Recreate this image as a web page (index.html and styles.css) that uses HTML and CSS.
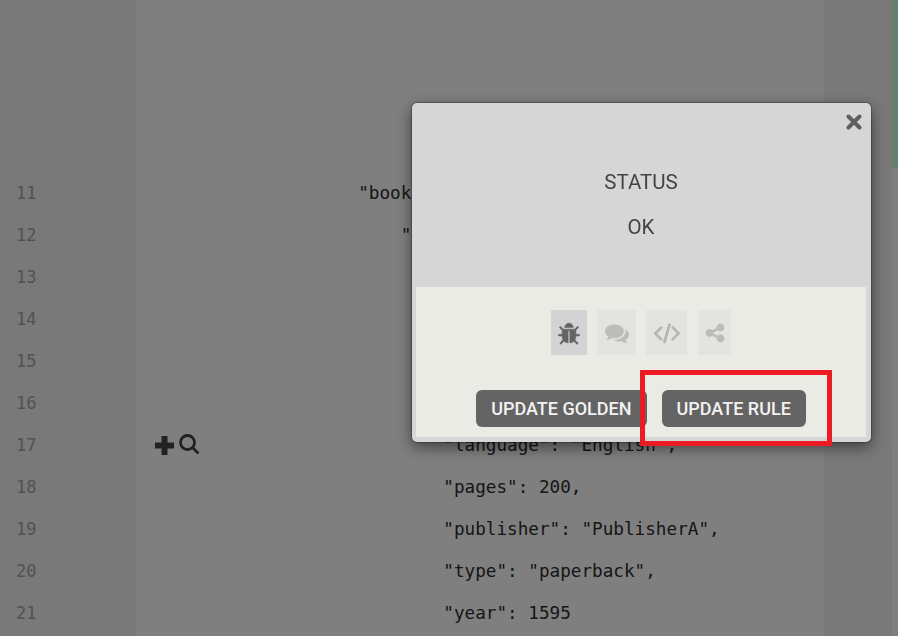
FILE: index.html
```html
<!DOCTYPE html>
<html lang="en">
<head>
<meta charset="utf-8">
<title>Rule status</title>
<link rel="stylesheet" href="styles.css">
</head>
<body>
<div class="editor">
  <div class="rows">
    <div class="row"><span class="num">11</span><span class="code">                     "book_info": {</span></div>
    <div class="row"><span class="num">12</span><span class="code">                         "book": {</span></div>
    <div class="row"><span class="num">13</span><span class="code"></span></div>
    <div class="row"><span class="num">14</span><span class="code"></span></div>
    <div class="row"><span class="num">15</span><span class="code"></span></div>
    <div class="row"><span class="num">16</span><span class="code"></span></div>
    <div class="row"><span class="num">17</span><span class="code">                             "language": "English",</span>
      <span class="row-actions">
        <svg class="act-plus" viewBox="0 0 19 19"><path d="M6.500 0h6v6.500H19v6h-6.500V19h-6v-6.500H0v-6h6.500z"/></svg>
        <svg class="act-search" viewBox="0 0 21 21"><circle cx="8.500" cy="8.500" r="7"/><path d="M13.500 13.500l6 6"/></svg>
      </span>
    </div>
    <div class="row"><span class="num">18</span><span class="code">                             "pages": 200,</span></div>
    <div class="row"><span class="num">19</span><span class="code">                             "publisher": "PublisherA",</span></div>
    <div class="row"><span class="num">20</span><span class="code">                             "type": "paperback",</span></div>
    <div class="row"><span class="num">21</span><span class="code">                             "year": 1595</span></div>
  </div>
  <div class="right-rail"></div>
  <div class="minimap"><div class="minimap-mark"></div></div>
</div>

<div class="backdrop"></div>

<div class="modal">
  <div class="modal-head">
    <svg class="close" viewBox="0 0 16 16"><path d="M2.500 2.500l11 11M13.500 2.500l-11 11"/></svg>
    <p class="status-label">STATUS</p>
    <p class="status-value">OK</p>
  </div>
  <div class="modal-foot">
    <div class="tabs">
      <div class="tab tab-bug active">
        <svg viewBox="0 0 1792 1792" class="ico"><path d="M1696 1056q0 26-19 45t-45 19h-224q0 171-67 290l208 209q19 19 19 45t-19 45q-18 19-45 19t-45-19l-198-197q-5 5-15 13t-42 28.500-65 36.500-82 29-97 13v-896h-128v896q-51 0-101.500-13.500t-87-33-66-39-43.500-32.500l-15-14-183 207q-20 21-48 21-24 0-43-16-19-18-20.500-44.500t15.500-46.500l202-227q-58-114-58-274h-224q-26 0-45-19t-19-45 19-45 45-19h224v-294l-173-173q-19-19-19-45t19-45 45-19 45 19l173 173h844l173-173q19-19 45-19t45 19 19 45-19 45l-173 173v294h224q26 0 45 19t19 45zm-480-576h-640q0-133 93.500-226.500t226.500-93.500 226.500 93.500 93.500 226.500z"/></svg>
      </div>
      <div class="tab tab-chat">
        <svg viewBox="0 0 1792 1792" class="ico"><path d="M1408 768q0 139-94 257t-256.500 186.500-353.500 68.500q-86 0-176-16-124 88-278 128-36 9-86 16h-3q-11 0-20.500-8t-11.500-21q-1-3-1-6.500t.500-6.500 2-6l2.500-5 3.500-5.500 4-5 4.500-5 4-4.500q5-6 23-25t26-29.500 22.500-29 25-38.500 20.500-44q-124-72-195-177t-71-224q0-139 94-257t256.500-186.500 353.500-68.500 353.500 68.500 256.500 186.500 94 257zm384 256q0 120-71 224.500t-195 176.500q10 24 20.500 44t25 38.500 22.500 29 26 29.500 23 25q1 1 4 4.500t4.500 5 4 5 3.500 5.500l2.500 5 2 6 .5 6.500-1 6.500q-3 14-13 22t-22 7q-50-7-86-16-154-40-278-128-90 16-176 16-271 0-472-132 58 4 88 4 161 0 309-45t264-129q125-92 192-212t67-254q0-77-23-152 129 71 204 178t75 230z"/></svg>
      </div>
      <div class="tab tab-code">
        <svg viewBox="-20 0 1840 1792" class="ico"><path d="M553 1399l-50 50q-10 10-23 10t-23-10l-466-466q-10-10-10-23t10-23l466-466q10-10 23-10t23 10l50 50q10 10 10 23t-10 23l-393 393 393 393q10 10 10 23t-10 23zm591-1067l-373 1291q-4 13-15.500 19.500t-23.500 2.500l-62-17q-13-4-19.500-15.500t-2.500-24.500l373-1291q4-13 15.500-19.500t23.500-2.500l62 17q13 4 19.500 15.500t2.500 24.500zm657 651l-466 466q-10 10-23 10t-23-10l-50-50q-10-10-10-23t10-23l393-393-393-393q-10-10-10-23t10-23l50-50q10-10 23-10t23 10l466 466q10 10 10 23t-10 23z"/></svg>
      </div>
      <div class="tab tab-share">
        <svg viewBox="0 0 1792 1792" class="ico"><path d="M1344 1024q133 0 226.500 93.500t93.500 226.500-93.500 226.500-226.500 93.500-226.500-93.500-93.500-226.500q0-12 2-34l-360-180q-92 86-218 86-133 0-226.500-93.500t-93.500-226.500 93.500-226.500 226.500-93.500q126 0 218 86l360-180q-2-22-2-34 0-133 93.500-226.500t226.500-93.500 226.500 93.500 93.500 226.500-93.500 226.500-226.500 93.500q-126 0-218-86l-360 180q2 22 2 34t-2 34l360 180q92-86 218-86z"/></svg>
      </div>
    </div>
    <div class="actions">
      <button class="btn" type="button">UPDATE GOLDEN</button>
      <button class="btn" type="button">UPDATE RULE</button>
    </div>
  </div>
</div>

<div class="callout"></div>
</body>
</html>
```
FILE: styles.css
```css
* { box-sizing: border-box; }
html, body { margin: 0; height: 100%; overflow: hidden; background: #fff; }
body { font-family: Roboto, sans-serif; }

.editor {
  display: flex;
  height: 636px;
  padding-top: 172px;
  background: #fff;
  background-image: linear-gradient(to right, #f3f3f3 136px, transparent 136px);
}
.rows { width: 824px; flex: none; }
.row { display: flex; height: 42px; position: relative; }
.num {
  width: 135px; flex: none; padding-left: 16px;
  font: 17px/42px "DejaVu Sans Mono", monospace;
  color: #a4a4a4;
}
.code {
  white-space: pre;
  font: 17.660px/42px "DejaVu Sans Mono", monospace;
  color: #2c2c2c;
}
.row-actions { position: absolute; left: 155px; top: 10px; display: flex; gap: 5px; align-items: flex-start; }
.act-plus { width: 19px; height: 19px; margin-top: 2px; fill: #444; }
.act-search { width: 21px; height: 21px; fill: none; stroke: #444; stroke-width: 2.800; }

.right-rail { position: absolute; left: 824px; top: 0; width: 68px; height: 636px; background: #f3f3f3; }
.minimap { position: absolute; left: 892px; top: 0; width: 6px; height: 636px; background: #fff; }
.minimap-mark { height: 168px; background: #d2ffdc; }

.backdrop { position: fixed; inset: 0; background: rgba(0,0,0,.5); }

.modal {
  position: absolute; left: 412px; top: 103px; width: 459px; height: 339px;
  display: flex; flex-direction: column;
  background: #d6d6d6;
  border-radius: 5px;
  box-shadow: 0 0 1px 1px rgba(0,0,0,.25), 0 5px 15px rgba(0,0,0,.5);
  padding: 0 5px 5px 4px;
}
.modal-head { height: 184px; position: relative; padding-top: 57px; text-align: center; color: #444; font-size: 20.500px; font-weight: 400; }
.status-label, .status-value { margin: 0; height: 45px; line-height: 45px; }
.close { position: absolute; right: 4px; top: 11px; width: 16px; height: 16px; fill: none; stroke: #5f5f5f; stroke-width: 4; stroke-linecap: round; }

.modal-foot { flex: 1; background: #ebebe6; display: flex; flex-direction: column; align-items: center; padding-top: 23px; }
.tabs { display: flex; gap: 10px; height: 45px; }
.tab { display: flex; align-items: center; justify-content: center; background: #e3e3df; height: 45px; }
.tab-bug { width: 36px; background: #d3d3d3; }
.tab-chat { width: 39px; }
.tab-code { width: 41px; }
.tab-share { width: 33px; margin-left: 1px; }
.ico { fill: #bcbcb9; width: 24px; height: 24px; }
.tab-bug .ico { fill: #646464; stroke: #646464; stroke-width: 40; }
.tab-code .ico { width: 26px; height: 25px; fill: #b4b4b1; stroke: #b4b4b1; stroke-width: 70; }
.tab-share .ico { width: 22px; height: 24px; }

.actions { display: flex; gap: 15px; margin-top: 35px; }
.btn {
  height: 37px; border: 0; border-radius: 6px; padding: 0 15px;
  background: #646464; color: #f2f2f2;
  font: 500 18px Roboto, sans-serif;
}

.callout { position: absolute; left: 640px; top: 370px; width: 192px; height: 76px; border: 5px solid #ed1c24; }
```
